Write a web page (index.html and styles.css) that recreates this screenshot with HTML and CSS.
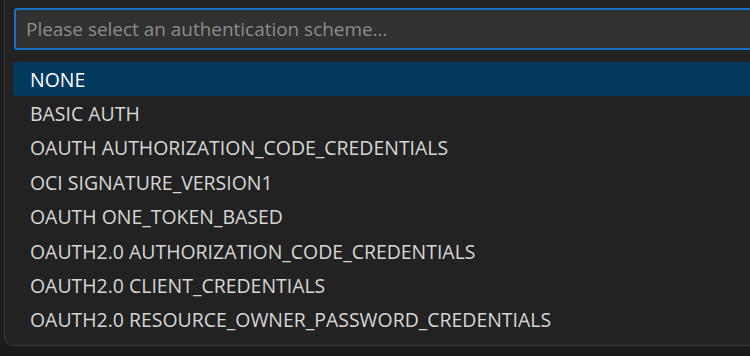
FILE: index.html
```html
<!DOCTYPE html>
<html>
<head>
<meta charset="utf-8">
<link rel="stylesheet" href="styles.css">
</head>
<body>
<div class="page">
  <div class="gutter"></div>
  <div class="quick-pick">
    <div class="input-box">
      <input class="input" type="text" placeholder="Please select an authentication scheme...">
    </div>
    <ul class="list">
      <li class="item selected">NONE</li>
      <li class="item">BASIC AUTH</li>
      <li class="item">OAUTH AUTHORIZATION_CODE_CREDENTIALS</li>
      <li class="item">OCI SIGNATURE_VERSION1</li>
      <li class="item">OAUTH ONE_TOKEN_BASED</li>
      <li class="item">OAUTH2.0 AUTHORIZATION_CODE_CREDENTIALS</li>
      <li class="item">OAUTH2.0 CLIENT_CREDENTIALS</li>
      <li class="item">OAUTH2.0 RESOURCE_OWNER_PASSWORD_CREDENTIALS</li>
    </ul>
  </div>
</div>
</body>
</html>
```
FILE: styles.css
```css
html, body {
  margin: 0;
  padding: 0;
  background: #1b1b1b;
  overflow: hidden;
  width: 750px;
  height: 356px;
}
.page {
  display: flex;
  align-items: flex-start;
  width: 750px;
}
.gutter {
  width: 4px;
  height: 345px;
  background: #1d1d1d;
  flex: none;
}
.quick-pick {
  flex: 1;
  min-width: 0;
  height: 337px;
  background: #222222;
  border-left: 1px solid #3a3a3a;
  border-bottom: 1px solid #3a3a3a;
  border-radius: 0 0 0 9px;
  padding: 8px 0 0 9px;
  font-family: "Open Sans", "Noto Sans", sans-serif;
}
.input-box {
  height: 38px;
  border: 2px solid #1b6ec2;
  border-right: none;
  border-radius: 3px 0 0 3px;
  background: #313131;
  display: flex;
  align-items: center;
  padding-left: 10px;
}
.input {
  background: transparent;
  border: none;
  outline: none;
  font-family: "Open Sans", "Noto Sans", sans-serif;
  font-size: 18.95px;
  color: #cccccc;
  width: 100%;
  padding: 0;
}
.input::placeholder {
  color: #8c8c8c;
}
.list {
  list-style: none;
  margin: 12px 0 0 -1px;
  padding: 0;
}
.item {
  height: 34.4px;
  display: flex;
  align-items: center;
  padding-left: 17px;
  font-size: 19.45px;
  color: #d6d6d6;
  border-radius: 4px 0 0 4px;
  white-space: nowrap;
}
.item.selected {
  background: #04395e;
  color: #ffffff;
}
```
